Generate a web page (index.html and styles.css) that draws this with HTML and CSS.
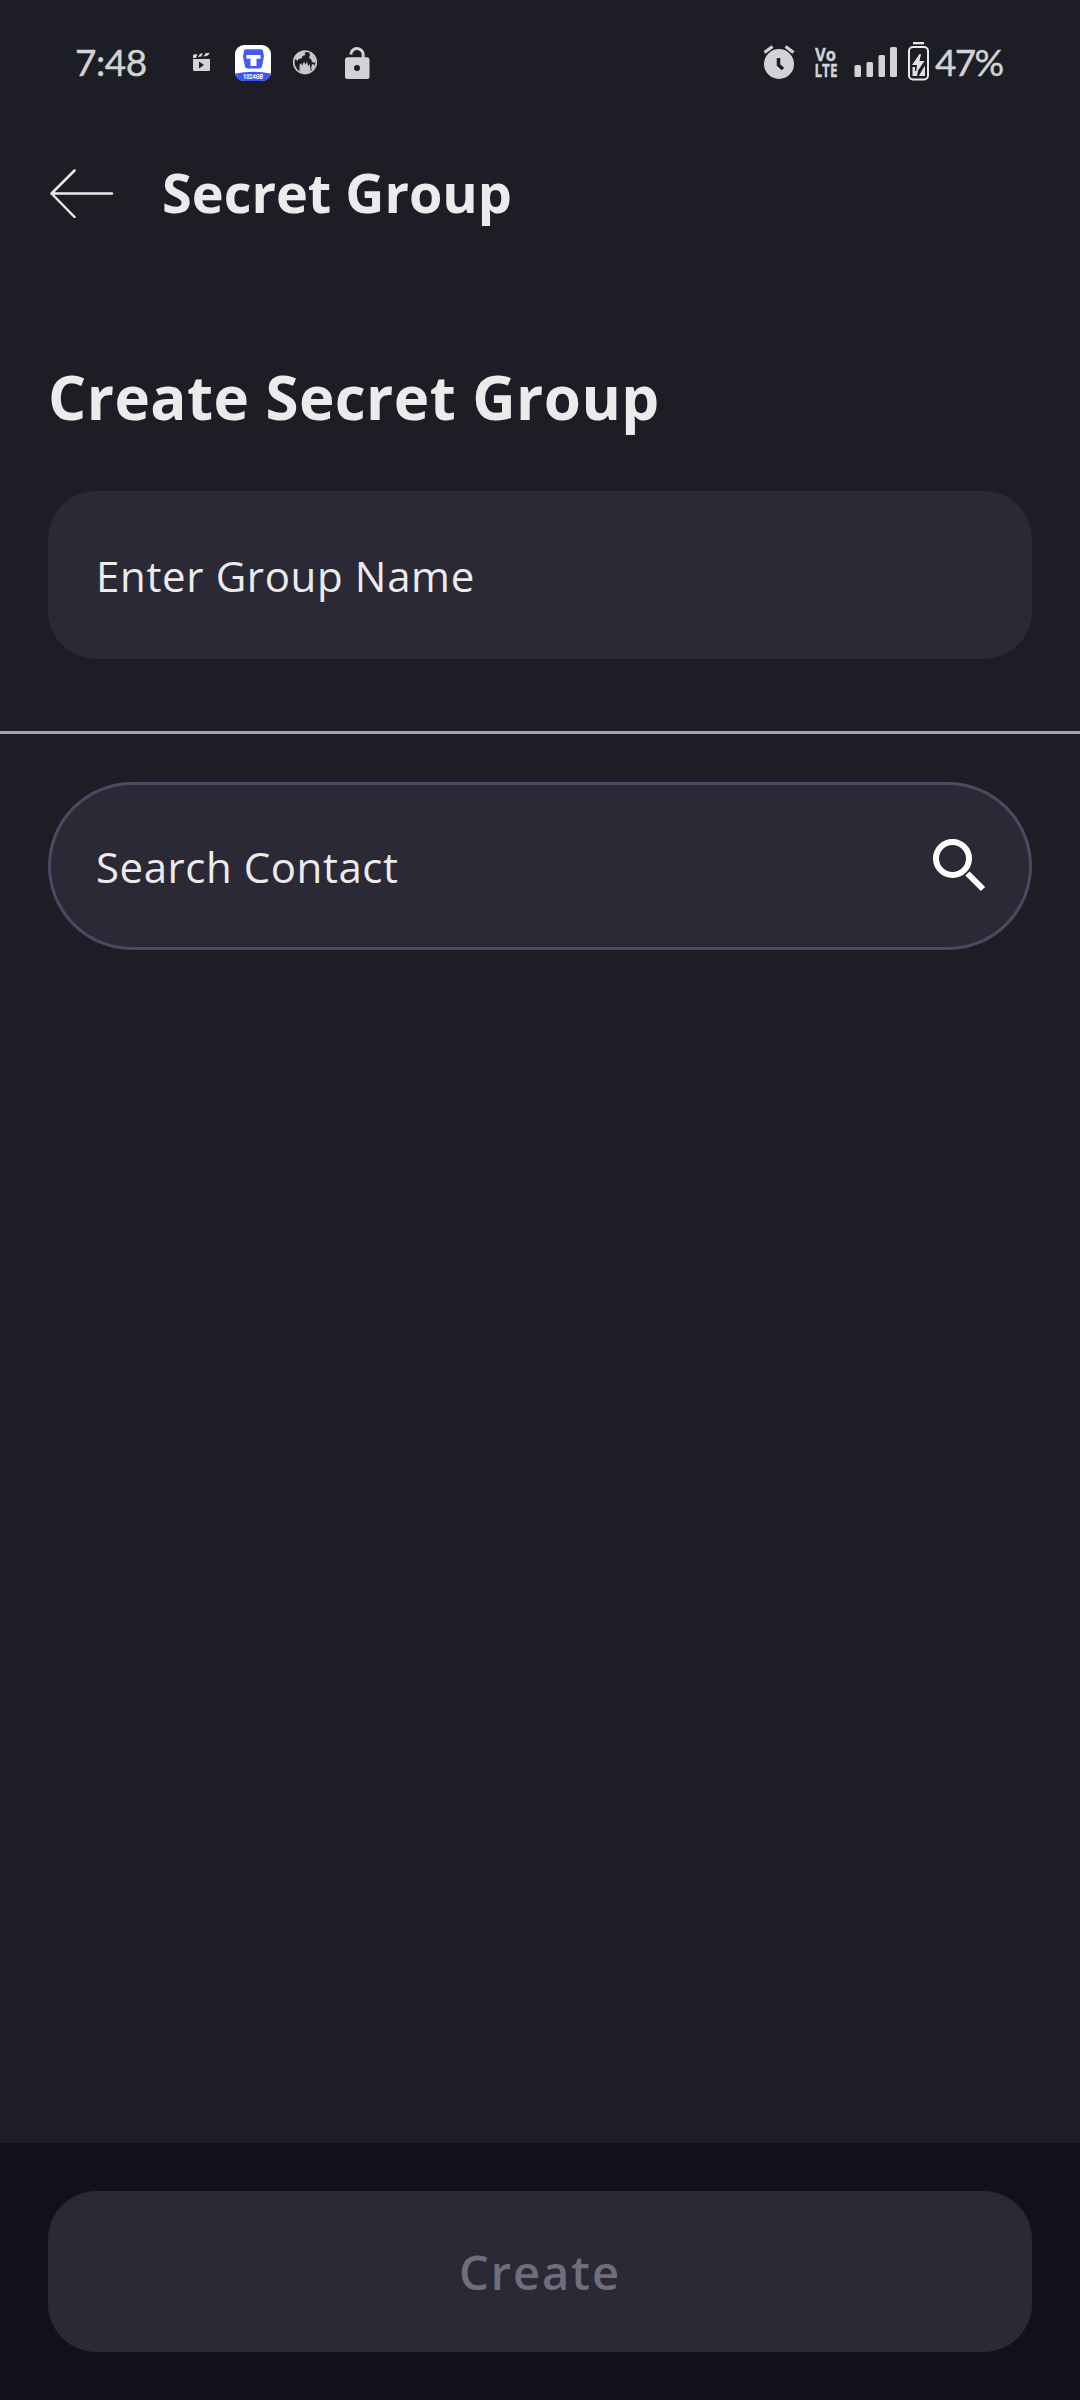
FILE: index.html
```html
<!DOCTYPE html>
<html lang="en">
<head>
<meta charset="utf-8">
<title>Secret Group</title>
<link rel="stylesheet" href="styles.css">
</head>
<body>
<div class="screen">
  <div class="status-bar">
    <span class="clock">7:48</span>
    <svg class="notices" width="182" height="40" viewBox="190 42 182 40">
      <g fill="#d3d3d5">
        <path d="M193 59h17v10.500q0 1.500-1.500 1.500h-14q-1.500 0-1.500-1.500z"/>
        <path d="M193 58v-3l2.500-1 2 .5-1.500 3.500zM198 57l2-3.300 3-.4-1.700 3.300zM203.500 56.500l2-3.200 3.700-.6v1.300l-2.200 2z"/>
        <path d="M199 61.500v7l5-3.500z" fill="#1d1d26"/>
      </g>
      <rect x="235" y="45" width="36" height="36" rx="9" fill="#fff"/>
      <path d="M235.500 73.500q17.500-3.500 35 0q-1 7.500-9 7.500h-17q-8 0-9-7.500z" fill="#3a55f5"/>
      <path d="M246 49.300h15q1.500 0 2 1.500l1 5.700-2 10q-.5 2-2.500 2h-12q-2 0-2.500-2l-2-10 1-5.700q.5-1.500 2-1.500z" fill="#4658f8"/>
      <path d="M246.500 55h14v3.700h-4V66h-6v-7.300h-4z" fill="#fff"/>
      <text class="badge-label" x="253" y="79" text-anchor="middle" textLength="20" lengthAdjust="spacingAndGlyphs">1024GB</text>
      <circle cx="305" cy="62.300" r="11.300" fill="none" stroke="#c9c9cc" stroke-width="1.600"/>
      <path d="M294.500 58l3-4.500 5-2.500 4 .5-2 2 1 1.500-3 1-1 2.500-3 .5-1 2zM309 52l4 3 2.500 5-.5 3-3-1-1-3-2-1 1-3zM299.500 71v-6l2-2 .5 3 2-4.500 1.500 3 1.500-3 1 4.500 1.500-2 1.500 7-3 2-5 .5zM312 64l3 1-2 5-2-1z" fill="#c9c9cc"/>
      <path d="M350.800 54.500a6.200 6.200 0 0 1 12.400 .5v3" fill="none" stroke="#d3d3d5" stroke-width="3"/>
      <rect x="345" y="57.300" width="24.500" height="21.700" rx="2.500" fill="#d3d3d5"/>
      <circle cx="357" cy="68" r="3" fill="#1d1d26"/>
    </svg>
    <svg class="system" width="170" height="46" viewBox="762 38 170 46">
      <g fill="#d3d3d5">
        <circle cx="779" cy="64" r="15"/>
        <path d="M764.500 52.500l8-6M785.500 46.500l8 6" stroke="#d3d3d5" stroke-width="3.200"/>
        <path d="M778.500 58v7l4.500 4" fill="none" stroke="#1d1d26" stroke-width="3.500"/>
        <rect x="854.500" y="65" width="6.500" height="12" rx="1.500"/>
        <rect x="866.500" y="62" width="6.500" height="15" rx="1.500"/>
        <rect x="878.500" y="55" width="6.500" height="22" rx="1.500"/>
        <rect x="890" y="47" width="7" height="30" rx="1.500"/>
      </g>
      <text class="volte" x="815" y="60.800" textLength="21" lengthAdjust="spacingAndGlyphs">Vo</text>
      <text class="volte" x="814.500" y="76.800" textLength="23" lengthAdjust="spacingAndGlyphs">LTE</text>
      <rect x="913" y="42" width="11" height="2.300" fill="#e8e8ea"/>
      <rect x="909" y="47" width="19" height="32.500" rx="4" fill="none" stroke="#e8e8ea" stroke-width="2"/>
      <path d="M912.500 67h2.500v4h3l-1 5h-4.500zM919 75.500l6-10v10.500h-5.500z" fill="#e0e0e2"/>
      <path d="M919.500 54l-7.500 11h5l-1 8.500 8.500-12.500h-5l1.500-7z" fill="#e0e0e2"/>
    </svg>
    <span class="battery">47%</span>
  </div>
  <header class="app-bar">
    <svg class="back" width="64" height="50" viewBox="50 168 64 50" fill="none" stroke="#ebebeb" stroke-width="2.500" stroke-linecap="round" stroke-linejoin="round">
      <path d="M74.500 170.500L51.500 193.500L74.500 217M51.500 193.500H112"/>
    </svg>
    <h1 class="app-title">Secret Group</h1>
  </header>
  <main class="content">
    <section class="group-section">
      <h2 class="heading">Create Secret Group</h2>
      <div class="field">Enter Group Name</div>
    </section>
    <section class="search-section">
      <div class="search">
        <span>Search Contact</span>
        <svg class="search-icon" width="54" height="54" viewBox="932 838 54 54" fill="none" stroke="#fff">
          <circle cx="952.500" cy="858.500" r="16.500" stroke-width="6"/>
          <path d="M967.500 873.500L983 889" stroke-width="6"/>
        </svg>
      </div>
    </section>
  </main>
  <footer class="footer">
    <button class="create" type="button" disabled>Create</button>
  </footer>
</div>
</body>
</html>
```

FILE: styles.css
```css
* { box-sizing: border-box; }

body {
  margin: 0;
  background: #1d1d26;
  color: #ebebeb;
  font-family: "Open Sans", "Noto Sans", sans-serif;
}

.screen {
  display: flex;
  flex-direction: column;
  width: 1080px;
  height: 2400px;
}

.status-bar {
  display: flex;
  align-items: flex-start;
  height: 120px;
  padding: 38px 76px 0 75px;
  color: #d3d3d5;
  font-family: Lato, sans-serif;
  font-size: 37px;
  line-height: 48px;
  letter-spacing: -0.5px;
  -webkit-text-stroke: 0.4px #d3d3d5;
}

.status-bar svg { -webkit-text-stroke: 0; letter-spacing: 0; }

.clock { width: 115px; }

.notices { margin-top: 4px; }

.system { margin-left: auto; }

.battery {
  width: 72px;
  padding-left: 3px;
  letter-spacing: -1.700px;
}

.volte {
  font: 700 18.500px/1 "Open Sans", sans-serif;
  fill: #d3d3d5;
  stroke: #d3d3d5;
  stroke-width: 0.3px;
}

.badge-label {
  font: 700 6.500px Roboto, sans-serif;
  fill: #fff;
}

.app-bar {
  display: flex;
  align-items: center;
  gap: 48px;
  height: 146px;
  padding-left: 50px;
}

.app-title {
  margin: -3px 0 0;
  font-size: 54px;
  font-weight: 700;
  line-height: 74px;
}

.content { flex: 1; }

.group-section {
  padding: 90px 48px 72px;
  border-bottom: 3px solid #a6a5b8;
}

.heading {
  margin: 0 0 53px;
  font-size: 60px;
  font-weight: 700;
  line-height: 82px;
  letter-spacing: 0.450px;
}

.field,
.search {
  display: flex;
  align-items: center;
  height: 168px;
  padding: 1px 48px 0;
  border-radius: 48px;
  background: #2a2935;
  font-size: 42px;
  letter-spacing: 0.650px;
}

.search-section { padding: 48px; }

.search {
  justify-content: space-between;
  padding: 0 43px 0 45px;
  border: 3px solid #4c4a62;
  border-radius: 84px;
  letter-spacing: 0.550px;
}

.search-icon { margin-top: -2px; }

.footer {
  height: 257px;
  padding: 48px;
  background: #11111a;
}

.create {
  width: 100%;
  height: 161px;
  padding: 1px 0 0;
  border: 0;
  border-radius: 48px;
  background: #2a2935;
  color: #6f6e7c;
  font: 600 47px/66px "Open Sans", sans-serif;
  letter-spacing: 2px;
}
```
